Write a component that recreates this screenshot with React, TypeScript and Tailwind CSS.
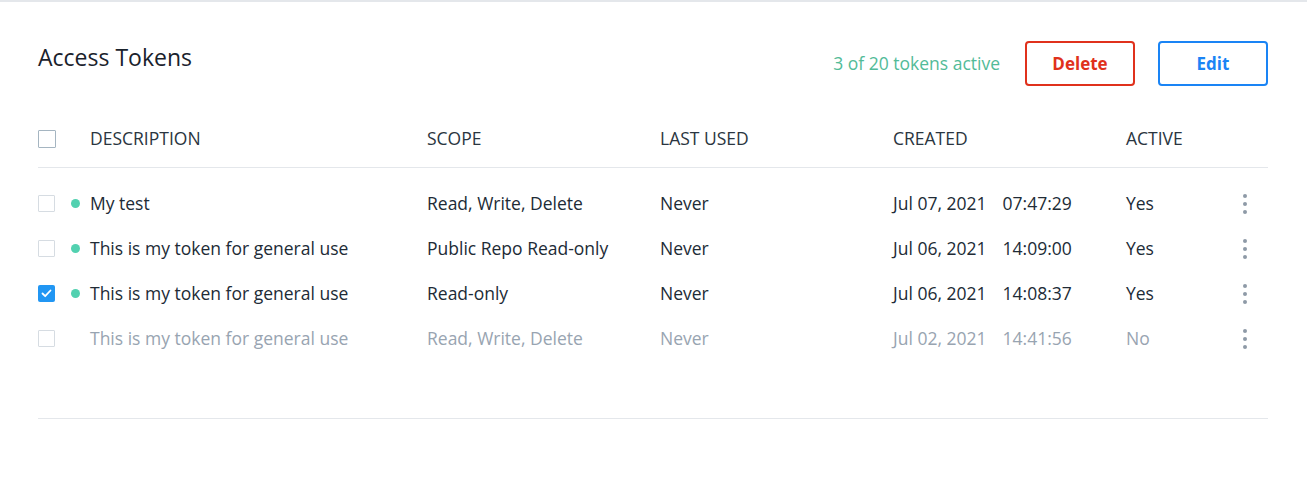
import React from 'react';

interface Token {
  description: string;
  scope: string;
  lastUsed: string;
  date: string;
  time: string;
  active: boolean;
  checked: boolean;
}

const tokens: Token[] = [
  { description: 'My test', scope: 'Read, Write, Delete', lastUsed: 'Never', date: 'Jul 07, 2021', time: '07:47:29', active: true, checked: false },
  { description: 'This is my token for general use', scope: 'Public Repo Read-only', lastUsed: 'Never', date: 'Jul 06, 2021', time: '14:09:00', active: true, checked: false },
  { description: 'This is my token for general use', scope: 'Read-only', lastUsed: 'Never', date: 'Jul 06, 2021', time: '14:08:37', active: true, checked: true },
  { description: 'This is my token for general use', scope: 'Read, Write, Delete', lastUsed: 'Never', date: 'Jul 02, 2021', time: '14:41:56', active: false, checked: false },
];

const cols = 'grid grid-cols-[52px_337px_233px_233px_233px_1fr] items-center';

function Checkbox({ checked, header }: { checked?: boolean; header?: boolean }) {
  if (checked) {
    return (
      <span className="flex items-center justify-center w-[17px] h-[17px] rounded-[2px] bg-[#2196f3]">
        <svg width="11" height="9" viewBox="0 0 11 9" fill="none">
          <path d="M1.5 4.5L4.2 7.2L9.5 1.5" stroke="white" strokeWidth="1.8" strokeLinecap="round" strokeLinejoin="round" />
        </svg>
      </span>
    );
  }
  return (
    <span
      className={
        header
          ? 'block w-[18px] h-[18px] border border-[#a5b5c1] rounded-[1px]'
          : 'block w-[17px] h-[17px] border border-[#d6dce2] rounded-[1px]'
      }
    />
  );
}

function Kebab() {
  return (
    <span className="flex flex-col gap-[4px] items-center">
      <span className="w-[4px] h-[4px] rounded-full bg-[#8e9aa7]" />
      <span className="w-[4px] h-[4px] rounded-full bg-[#8e9aa7]" />
      <span className="w-[4px] h-[4px] rounded-full bg-[#8e9aa7]" />
    </span>
  );
}

export default function App() {
  return (
    <div
      className="w-[1307px] h-[496px] bg-white border-t-2 border-[#e4e7eb] px-[38px] pr-[39px] text-[17.5px] text-[#212b36]"
      style={{ fontFamily: '"Open Sans", "Liberation Sans", sans-serif' }}
    >
      <div className="flex items-start justify-between pt-[39px]">
        <h1 className="text-[23px] font-medium leading-[30px] mt-[1px] text-[#1a222c]">Access Tokens</h1>
        <div className="flex items-center">
          <span className="text-[#52bb98] mr-[25px]">3 of 20 tokens active</span>
          <button className="w-[110px] h-[45px] border-2 border-[#e0311c] rounded-[4px] text-[#e0311c] font-bold text-[17px]">
            Delete
          </button>
          <button className="w-[110px] h-[45px] border-2 border-[#1a84f5] rounded-[4px] text-[#1a84f5] font-bold text-[17px] ml-[23px]">
            Edit
          </button>
        </div>
      </div>

      <div className={`${cols} h-[60px] mt-[22px] pt-[2px] border-b border-[#e4e7eb] text-[#2a3540]`}>
        <div><Checkbox header /></div>
        <div>DESCRIPTION</div>
        <div>SCOPE</div>
        <div>LAST USED</div>
        <div>CREATED</div>
        <div>ACTIVE</div>
      </div>

      <div className="pt-[13px] pb-[57px] border-b border-[#e4e7eb]">
        {tokens.map((t, i) => (
          <div key={i} className={`${cols} h-[45px] ${t.active ? 'text-[#212b36]' : 'text-[#98a4b1]'}`}>
            <div className="flex items-center">
              <Checkbox checked={t.checked} />
              {t.active && <span className="ml-[16px] w-[9px] h-[9px] rounded-full bg-[#52d1b0]" />}
            </div>
            <div>{t.description}</div>
            <div>{t.scope}</div>
            <div>{t.lastUsed}</div>
            <div className="flex gap-[16px]">
              <span>{t.date}</span>
              <span>{t.time}</span>
            </div>
            <div className="flex items-center justify-between pr-[21px]">
              <span>{t.active ? 'Yes' : 'No'}</span>
              <Kebab />
            </div>
          </div>
        ))}
      </div>
    </div>
  );
}
